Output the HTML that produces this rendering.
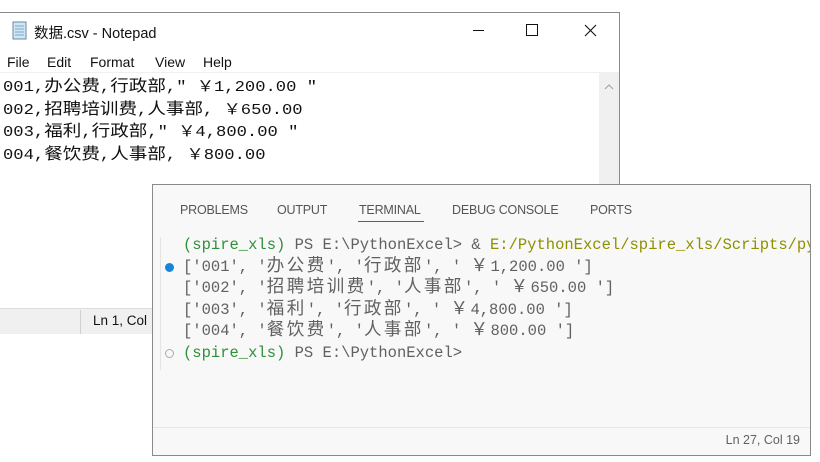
<!DOCTYPE html>
<html><head><meta charset="utf-8"><style>
*{margin:0;padding:0;box-sizing:border-box}
body{width:820px;height:462px;background:#fff;position:relative;overflow:hidden;font-family:"Liberation Sans","Noto Sans CJK SC",sans-serif}
.abs{position:absolute;white-space:nowrap}
#np{left:0;top:12px;width:620px;height:322px;border:1px solid #8a8a8a;border-left:none;background:#fff}
.mono{font-family:"Liberation Mono","Noto Sans CJK SC",monospace}
.c{font-size:16px}
.k{font-size:17.5px;letter-spacing:2.5px;line-height:1}
#term{left:152px;top:184px;width:659px;height:272px;border:1px solid #8a8a8a;background:#f8f8f8;overflow:hidden}
.tab{position:absolute;top:18px;font-size:12.5px;color:#555;letter-spacing:-0.2px}
.tl{position:absolute;left:30px;font-size:15.5px;color:#616161;white-space:nowrap;line-height:21.6px}
.g{color:#2f8f3a}.o{color:#8f8f00}
.m{position:absolute;top:41px;font-size:14px;color:#111}
</style></head><body>
<div id="np" class="abs">
  <svg class="abs" style="left:11px;top:8px" width="17" height="19" viewBox="0 0 17 19"><rect x="2" y="1" width="13" height="17" fill="#cfe6f5" stroke="#6a8aa8"/><path d="M4 5h9M4 8h9M4 11h9M4 14h9" stroke="#7ea7c7"/></svg>
  <div class="abs" style="left:34px;top:9px;font-size:14.5px;color:#111">数据.csv - Notepad</div>
  <div class="abs" style="left:473px;top:17px;width:11px;height:1px;background:#111"></div>
  <div class="abs" style="left:526px;top:11px;width:12px;height:12px;border:1px solid #111"></div>
  <svg class="abs" style="left:584px;top:11px" width="13" height="13"><path d="M1 1L12 12M12 1L1 12" stroke="#111" stroke-width="1.1"/></svg>
  <div class="m" style="left:7px">File</div>
  <div class="m" style="left:47px">Edit</div>
  <div class="m" style="left:90px">Format</div>
  <div class="m" style="left:155px">View</div>
  <div class="m" style="left:203px">Help</div>
  <div class="abs" style="left:0;top:59px;width:619px;height:1px;background:#f0f0f0"></div>
  <div class="abs" style="left:599px;top:60px;width:20px;height:235px;background:#f0f0f0"></div>
  <svg class="abs" style="left:604px;top:70px" width="10" height="7"><path d="M1 6L5 2L9 6" stroke="#a0a0a0" fill="none"/></svg>
  <div class="abs mono" style="left:3px;top:64px;font-size:14.8px;line-height:21.7px;color:#111;transform:scaleX(1.16);transform-origin:0 0">
    001,<span class="c">办公费</span>,<span class="c">行政部</span>," ￥1,200.00 "<br>
    002,<span class="c">招聘培训费</span>,<span class="c">人事部</span>, ￥650.00<br>
    003,<span class="c">福利</span>,<span class="c">行政部</span>," ￥4,800.00 "<br>
    004,<span class="c">餐饮费</span>,<span class="c">人事部</span>, ￥800.00
  </div>
  <div class="abs" style="left:0;top:295px;width:619px;height:26px;background:#f0f0f0;border-top:1px solid #dcdcdc"></div>
  <div class="abs" style="left:80px;top:297px;width:1px;height:24px;background:#d0d0d0"></div>
  <div class="abs" style="left:93px;top:300px;font-size:13.5px;color:#111">Ln 1, Col</div>
</div>
<div id="term" class="abs">
  <div class="tab" style="left:27px">PROBLEMS</div>
  <div class="tab" style="left:124px">OUTPUT</div>
  <div class="tab" style="left:206px">TERMINAL</div>
  <div class="abs" style="left:205px;top:36px;width:66px;height:1px;background:#0078d4"></div>
  <div class="tab" style="left:299px">DEBUG CONSOLE</div>
  <div class="tab" style="left:437px">PORTS</div>
  <div class="abs" style="left:7px;top:52px;width:1px;height:133px;background:#e4e4e4"></div>
  <div class="abs" style="left:12px;top:78px;width:9px;height:9px;border-radius:50%;background:#1a85d6"></div>
  <div class="abs" style="left:12px;top:164px;width:9px;height:9px;border-radius:50%;border:1px solid #aaa"></div>
  <div class="tl mono" style="top:50px"><span class="g">(spire_xls)</span> PS E:\PythonExcel&gt; &amp; <span class="o">E:/PythonExcel/spire_xls/Scripts/python.exe</span></div>
  <div class="tl mono" style="top:71.6px">['001', '<span class="k">办公费</span>', '<span class="k">行政部</span>', ' <span class="k">￥</span>1,200.00 ']</div>
  <div class="tl mono" style="top:93.2px">['002', '<span class="k">招聘培训费</span>', '<span class="k">人事部</span>', ' <span class="k">￥</span>650.00 ']</div>
  <div class="tl mono" style="top:114.8px">['003', '<span class="k">福利</span>', '<span class="k">行政部</span>', ' <span class="k">￥</span>4,800.00 ']</div>
  <div class="tl mono" style="top:136.4px">['004', '<span class="k">餐饮费</span>', '<span class="k">人事部</span>', ' <span class="k">￥</span>800.00 ']</div>
  <div class="tl mono" style="top:158px"><span class="g">(spire_xls)</span> PS E:\PythonExcel&gt;</div>
  <div class="abs" style="left:0;top:242px;width:659px;height:1px;background:#e6e6e6"></div>
  <div class="abs" style="right:10px;top:248px;font-size:12.5px;color:#616161">Ln 27, Col 19</div>
</div>
</body></html>
